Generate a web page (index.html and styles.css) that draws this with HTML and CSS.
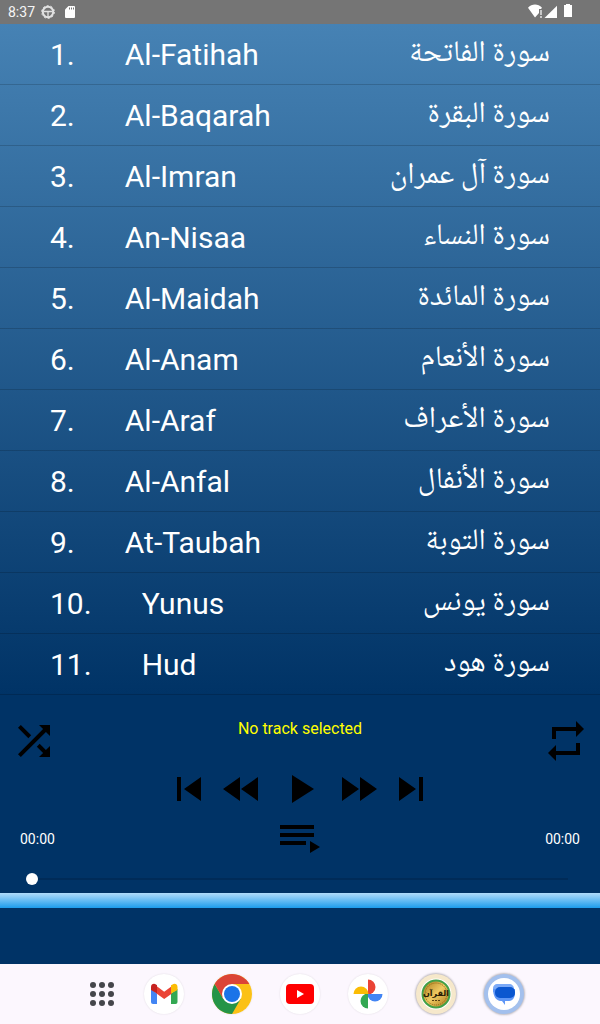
FILE: index.html
```
<!DOCTYPE html>
<html lang="en">
<head>
<meta charset="utf-8">
<meta name="viewport" content="width=device-width, initial-scale=1">
<title>Quran Audio Player</title>
<link rel="stylesheet" href="styles.css">
</head>
<body>
<header class="status">
  <div class="status-group">
    <span class="clock">8:37</span>
    <svg class="status-icon" width="14" height="14" viewBox="0 0 14 14" fill="none" stroke="#e2e2e2"><circle cx="7" cy="7" r="5.2" stroke-width="2"/><circle cx="7" cy="7" r="6.4" stroke-width="1" stroke-dasharray="2 2"/><path d="M2.5 6.5h9M7 7v5" stroke-width="1.3"/></svg>
    <svg class="sd-icon" width="10" height="12" viewBox="0 0 10 12"><path fill="#fff" d="M3.500 0H9a1 1 0 0 1 1 1v10a1 1 0 0 1-1 1H1a1 1 0 0 1-1-1V3.500z"/><path stroke="#757575" d="M4.500 1.500v2M6.500 1.500v2M8.500 1.500v2"/></svg>
  </div>
  <svg width="46" height="14" viewBox="0 0 46 14" fill="#fff"><path d="M0 2.800C4-1.500 10-1.500 14 2.800L13 4h-2v4L7 12.500z"/><path fill="#c8c8c8" d="M12 5h2v5h-2zM12 11h2v2h-2z"/><path d="M29 .8V13H16.500z"/><path d="M36 0h2v-1h4v1h2v12h-8z"/></svg>
</header>
<main class="app">
  <ol class="tracks">
    <li class="track"><span>1.</span><span>Al-Fatihah</span><span class="arabic" lang="ar" dir="rtl">سورة الفاتحة</span></li>
    <li class="track"><span>2.</span><span>Al-Baqarah</span><span class="arabic" lang="ar" dir="rtl">سورة البقرة</span></li>
    <li class="track"><span>3.</span><span>Al-Imran</span><span class="arabic" lang="ar" dir="rtl">سورة آل عمران</span></li>
    <li class="track"><span>4.</span><span>An-Nisaa</span><span class="arabic" lang="ar" dir="rtl">سورة النساء</span></li>
    <li class="track"><span>5.</span><span>Al-Maidah</span><span class="arabic" lang="ar" dir="rtl">سورة المائدة</span></li>
    <li class="track"><span>6.</span><span>Al-Anam</span><span class="arabic" lang="ar" dir="rtl">سورة الأنعام</span></li>
    <li class="track"><span>7.</span><span>Al-Araf</span><span class="arabic" lang="ar" dir="rtl">سورة الأعراف</span></li>
    <li class="track"><span>8.</span><span>Al-Anfal</span><span class="arabic" lang="ar" dir="rtl">سورة الأنفال</span></li>
    <li class="track"><span>9.</span><span>At-Taubah</span><span class="arabic" lang="ar" dir="rtl">سورة التوبة</span></li>
    <li class="track"><span>10.</span><span>Yunus</span><span class="arabic" lang="ar" dir="rtl">سورة يونس</span></li>
    <li class="track"><span>11.</span><span>Hud</span><span class="arabic" lang="ar" dir="rtl">سورة هود</span></li>
  </ol>
  <section class="player" aria-label="Player">
    <div class="player-top">
      <button class="icon-button" aria-label="Shuffle"><svg viewBox="0 0 24 24"><path d="M10.590 9.170 5.410 4 4 5.410l5.170 5.170 1.420-1.410zM14.500 4l2.040 2.040L4 18.590 5.410 20 17.960 7.460 20 9.500V4h-5.500zm.330 9.410-1.410 1.410 3.130 3.130L14.500 20H20v-5.500l-2.040 2.040-3.130-3.130z"/></svg></button>
      <p class="now-playing">No track selected</p>
      <button class="icon-button" aria-label="Repeat"><svg viewBox="0 0 24 24"><path d="M7 7h10v3l4-4-4-4v3H5v6h2V7zm10 10H7v-3l-4 4 4 4v-3h12v-6h-2v4z"/></svg></button>
    </div>
    <div class="controls">
      <button class="icon-button" aria-label="Previous"><svg viewBox="0 0 24 24"><path d="M6 6h2v12H6zm3.500 6 8.500 6V6z"/></svg></button>
      <button class="icon-button" aria-label="Rewind"><svg viewBox="0 0 24 24"><path d="M11 18V6l-8.500 6 8.500 6zm.5-6 8.500 6V6l-8.500 6z"/></svg></button>
      <button class="icon-button play" aria-label="Play"><svg viewBox="0 0 24 24"><path d="M8 5v14l11-7z"/></svg></button>
      <button class="icon-button" aria-label="Fast forward"><svg viewBox="0 0 24 24"><path d="m4 18 8.500-6L4 6v12zm9-12v12l8.500-6L13 6z"/></svg></button>
      <button class="icon-button" aria-label="Next"><svg viewBox="0 0 24 24"><path d="m6 18 8.500-6L6 6v12zM16 6v12h2V6h-2z"/></svg></button>
    </div>
    <div class="times">
      <span>00:00</span>
      <button class="icon-button" aria-label="Playlist"><svg viewBox="0 0 24 24"><path d="M19 9H2v2h17V9zm0-4H2v2h17V5zM2 15h13v-2H2v2zm15-2v6l5-3-5-3z"/></svg></button>
      <span>00:00</span>
    </div>
    <input class="seek" type="range" min="0" max="100" value="0" aria-label="Seek">
  </section>
  <div class="stripe"></div>
</main>
<nav class="taskbar" aria-label="Taskbar">
  <button class="apps" aria-label="All apps"><svg width="24" height="24" viewBox="0 0 24 24" fill="#45464b"><circle cx="3" cy="3" r="3"/><circle cx="12" cy="3" r="3"/><circle cx="21" cy="3" r="3"/><circle cx="3" cy="12" r="3"/><circle cx="12" cy="12" r="3"/><circle cx="21" cy="12" r="3"/><circle cx="3" cy="21" r="3"/><circle cx="12" cy="21" r="3"/><circle cx="21" cy="21" r="3"/></svg></button>
  <button class="app-icon" aria-label="Gmail"><svg viewBox="0 0 40 40"><path fill="#4285f4" d="M7 15l6 4.500V30H9a2 2 0 0 1-2-2z"/><path fill="#34a853" d="M27 19.500l6.500-4.500v13a2 2 0 0 1-2 2H27z"/><path fill="#ea4335" d="M12.500 12l7.700 5.800L28 12v7.500L20.200 25l-7.700-5.500z"/><path fill="#c5221f" d="M7 16v-3c0-3 3-4 5-2.500l1 .8v8.200z"/><path fill="#fbbc04" d="M27 19.500v-8.200l1.500-.8c2-1.500 5-.5 5 2.500v3z"/></svg></button>
  <button class="app-icon" aria-label="Chrome"><svg viewBox="0 0 40 40"><circle cx="20" cy="20" r="20" fill="#fbc116"/><path fill="#249447" d="M20 20 11.340 25 2.680 10A20 20 0 0 0 20 40l8.660-15z"/><path fill="#db4437" d="M2.680 10A20 20 0 0 1 37.320 10H20v10l-8.660 5z"/><circle cx="20" cy="20" r="10" fill="#fff"/><circle cx="20" cy="20" r="8" fill="#1a73e8"/></svg></button>
  <button class="app-icon" aria-label="YouTube"><svg viewBox="0 0 40 40"><rect x="6" y="10" width="28" height="20" rx="4" fill="#f00"/><path fill="#fff" d="M17 16v8l7-4z"/></svg></button>
  <button class="app-icon" aria-label="Photos"><svg viewBox="0 0 40 40"><path fill="#ea4335" d="M20 5.500a7.500 7.500 0 0 1 0 15z"/><path fill="#4285f4" d="M19.500 20h15a7.500 7.500 0 0 1-15 0z"/><path fill="#34a853" d="M20 19.500v15a7.500 7.500 0 0 1 0-15z"/><path fill="#fbbc04" d="M20.500 20h-15a7.500 7.500 0 0 1 15 0z"/></svg></button>
  <button class="app-icon quran" aria-label="Quran"><svg viewBox="0 0 40 40"><defs><linearGradient id="gold" x1="0" x2="1" y1="0" y2="1"><stop offset="0" stop-color="#a67518"/><stop offset=".5" stop-color="#efca62"/><stop offset="1" stop-color="#a87417"/></linearGradient></defs><circle cx="20" cy="20" r="15.500" fill="#fff"/><circle cx="20" cy="20" r="13.500" fill="url(#gold)" stroke="#43a047" stroke-width="2"/><circle cx="20" cy="20" r="11" fill="none" stroke="#8b6514" stroke-dasharray="1 1"/><text class="emblem" x="20" y="22" text-anchor="middle">القرآن</text><path stroke="#5b4212" d="M16 26.500h8" stroke-dasharray="2 1"/></svg></button>
  <button class="app-icon messages" aria-label="Messages"><svg viewBox="0 0 40 40"><circle cx="20" cy="20" r="16" fill="#fff"/><path fill="#7baaf7" d="M13 10h12c3 0 5 2 5 5v3H9v-4c0-2 2-4 4-4z"/><path fill="#5f97f6" d="M9 15c0 7 3 12 8 12h1l3 4v-4h4c4 0 6-4 6-8v-4z"/><rect x="11" y="13" width="20" height="11" rx="5" fill="#0b57d0"/></svg></button>
</nav>
</body>
</html>
```
FILE: styles.css
```
* { box-sizing: border-box; }
body {
  margin: 0;
  min-height: 100vh;
  display: flex;
  flex-direction: column;
  background: #003366;
  color: #fff;
  font-family: Roboto, "Noto Sans", sans-serif;
}
button { padding: 0; border: 0; background: none; cursor: pointer; }
svg { display: block; overflow: visible; }

.status {
  height: 24px;
  padding: 0 26px 0 8px;
  display: flex;
  align-items: center;
  justify-content: space-between;
  background: #757575;
  font-size: 14px;
  line-height: 24px;
}
.status-group { display: flex; align-items: center; gap: 6px; }
.clock { color: #f5f5f5; }
.sd-icon { margin-left: 4px; }

.app { flex: 1; display: flex; flex-direction: column; }
.tracks {
  margin: 0;
  padding: 0;
  list-style: none;
  background: linear-gradient(#4682b4, #003366);
}
.track {
  height: 61px;
  padding: 2px 50px 0;
  display: flex;
  align-items: center;
  gap: 50px;
  border-bottom: 1px solid rgba(0, 0, 0, 0.16);
  font-size: 30px;
  line-height: 58px;
}
.arabic {
  margin-left: auto;
  font-family: "Noto Naskh Arabic", "Noto Sans Arabic", "DejaVu Sans", sans-serif;
}

.player { padding-top: 22px; padding-bottom: 4px; }
.player-top {
  padding: 0 10px;
  display: flex;
  justify-content: space-between;
}
.now-playing { margin: 0; color: #ff0; font-size: 16px; line-height: 24px; }
.icon-button { width: 48px; height: 48px; }
.icon-button svg { width: 48px; height: 48px; fill: #000; }
.controls { display: flex; justify-content: center; gap: 5px; }
.play { margin: 0 5px; }
.times {
  margin-top: 2px;
  padding: 0 20px;
  display: flex;
  align-items: center;
  justify-content: space-between;
  font-size: 14px;
}
.seek {
  display: block;
  width: calc(100% - 52px);
  height: 20px;
  margin: 6px 26px 0;
  appearance: none;
  background: linear-gradient(#002b58, #002b58) center / calc(100% - 12px) 2px no-repeat;
}
.seek::-webkit-slider-thumb {
  appearance: none;
  width: 12px;
  height: 12px;
  border-radius: 50%;
  background: #fff;
}
.stripe { height: 15px; background: linear-gradient(#b0dcfb, #1c9cec); }

.taskbar {
  height: 60px;
  padding-left: 12px;
  display: flex;
  align-items: center;
  justify-content: center;
  gap: 28px;
  background: #fcf7fe;
}
.apps { width: 28px; height: 40px; padding: 0 2px; }
.app-icon {
  width: 40px;
  height: 40px;
  border-radius: 50%;
  background: #fff;
  box-shadow: 0 0 2px rgba(0, 0, 0, 0.12);
}
.app-icon svg { width: 40px; height: 40px; }
.quran { background: #f6e8cb; box-shadow: 0 0 2px 1px rgba(0, 0, 0, 0.25); }
.messages { background: #a3c0ed; box-shadow: 0 0 2px 1px rgba(0, 0, 0, 0.25); }
.emblem { font: bold 8px "DejaVu Sans", sans-serif; fill: #2b1d05; }
```
